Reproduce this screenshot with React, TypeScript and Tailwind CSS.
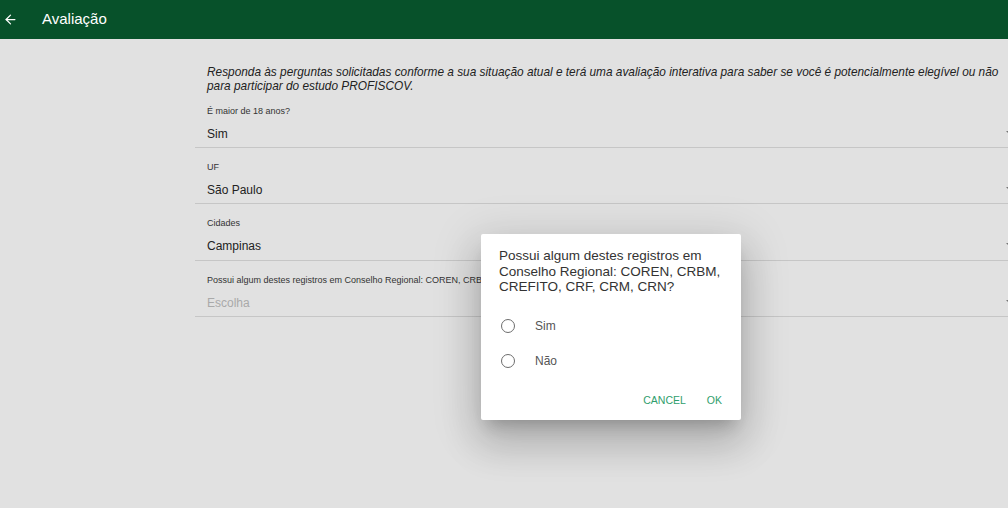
import { ArrowLeft } from "lucide-react";

const fields = [
  { label: "É maior de 18 anos?", value: "Sim", h: "h-[56px]" },
  { label: "UF", value: "São Paulo", h: "h-[56px]" },
  { label: "Cidades", value: "Campinas", h: "h-[57px]" },
  {
    label: "Possui algum destes registros em Conselho Regional: COREN, CRBM, CREFITO, CRF, CRM, CRN?",
    value: "",
    placeholder: "Escolha",
    h: "h-[56px]",
  },
];

const Field = ({ label, value, placeholder, h }: { label: string; value: string; placeholder?: string; h: string }) => (
  <div className={`relative ${h} pl-[12px] pt-[13px] border-b border-[#c6c6c6]`}>
    <div className="text-[9px] leading-[12px] text-[#333] whitespace-nowrap">{label}</div>
    <div className={`mt-[9px] text-[12px] leading-[16px] ${value ? "text-[#222]" : "text-[#a9a9a9]"}`}>
      {value || placeholder}
    </div>
    <span className="absolute right-[6px] top-[39px] w-0 h-0 border-l-[4px] border-r-[4px] border-t-[4px] border-l-transparent border-r-transparent border-t-[#757575]" />
  </div>
);

const App = () => {
  return (
    <div className="relative w-[1008px] h-[508px] overflow-hidden bg-[#e1e1e1] font-['Liberation_Sans',Arial,sans-serif]">
      <header className="h-[39px] bg-[#07512a] flex items-center text-white">
        <ArrowLeft className="ml-[3px] w-[15px] h-[15px]" strokeWidth={2} />
        <h1 className="ml-[24px] text-[15px]">Avaliação</h1>
      </header>

      <main className="pl-[195px] pt-[26px] w-[1020px]">
        <p className="pl-[12px] pr-[2px] text-[11.85px] leading-[14px] italic text-[#222] h-[27px] whitespace-nowrap">
          Responda às perguntas solicitadas conforme a sua situação atual e terá uma avaliação interativa para saber se você é potencialmente elegível ou não
          <br />
          para participar do estudo PROFISCOV.
        </p>
        {fields.map((f) => (
          <Field key={f.label} {...f} />
        ))}
      </main>

      <div className="absolute left-[481px] top-[234px] w-[260px] h-[186px] bg-white rounded-[2px] shadow-[0_11px_15px_-7px_rgba(0,0,0,0.2),0_24px_38px_3px_rgba(0,0,0,0.14),0_9px_46px_8px_rgba(0,0,0,0.12)] flex flex-col">
        <div className="pl-[18px] pt-[14px] text-[13.5px] leading-[15.5px] text-[#333]">
          Possui algum destes registros em
          <br />
          Conselho Regional: COREN, CRBM,
          <br />
          CREFITO, CRF, CRM, CRN?
        </div>
        <div className="mt-[24px] flex flex-col gap-[21px]">
          {["Sim", "Não"].map((o) => (
            <label key={o} className="flex items-center pl-[20px] h-[14px]">
              <span className="w-[14px] h-[14px] rounded-full border border-[#6d6d6d]" />
              <span className="ml-[20px] text-[12px] text-[#555]">{o}</span>
            </label>
          ))}
        </div>
        <div className="mt-auto mb-[11px] flex justify-end pr-[19px] gap-[21px] text-[10.5px] text-[#2f9e6d]">
          <span>CANCEL</span>
          <span>OK</span>
        </div>
      </div>
    </div>
  );
};

export default App;
